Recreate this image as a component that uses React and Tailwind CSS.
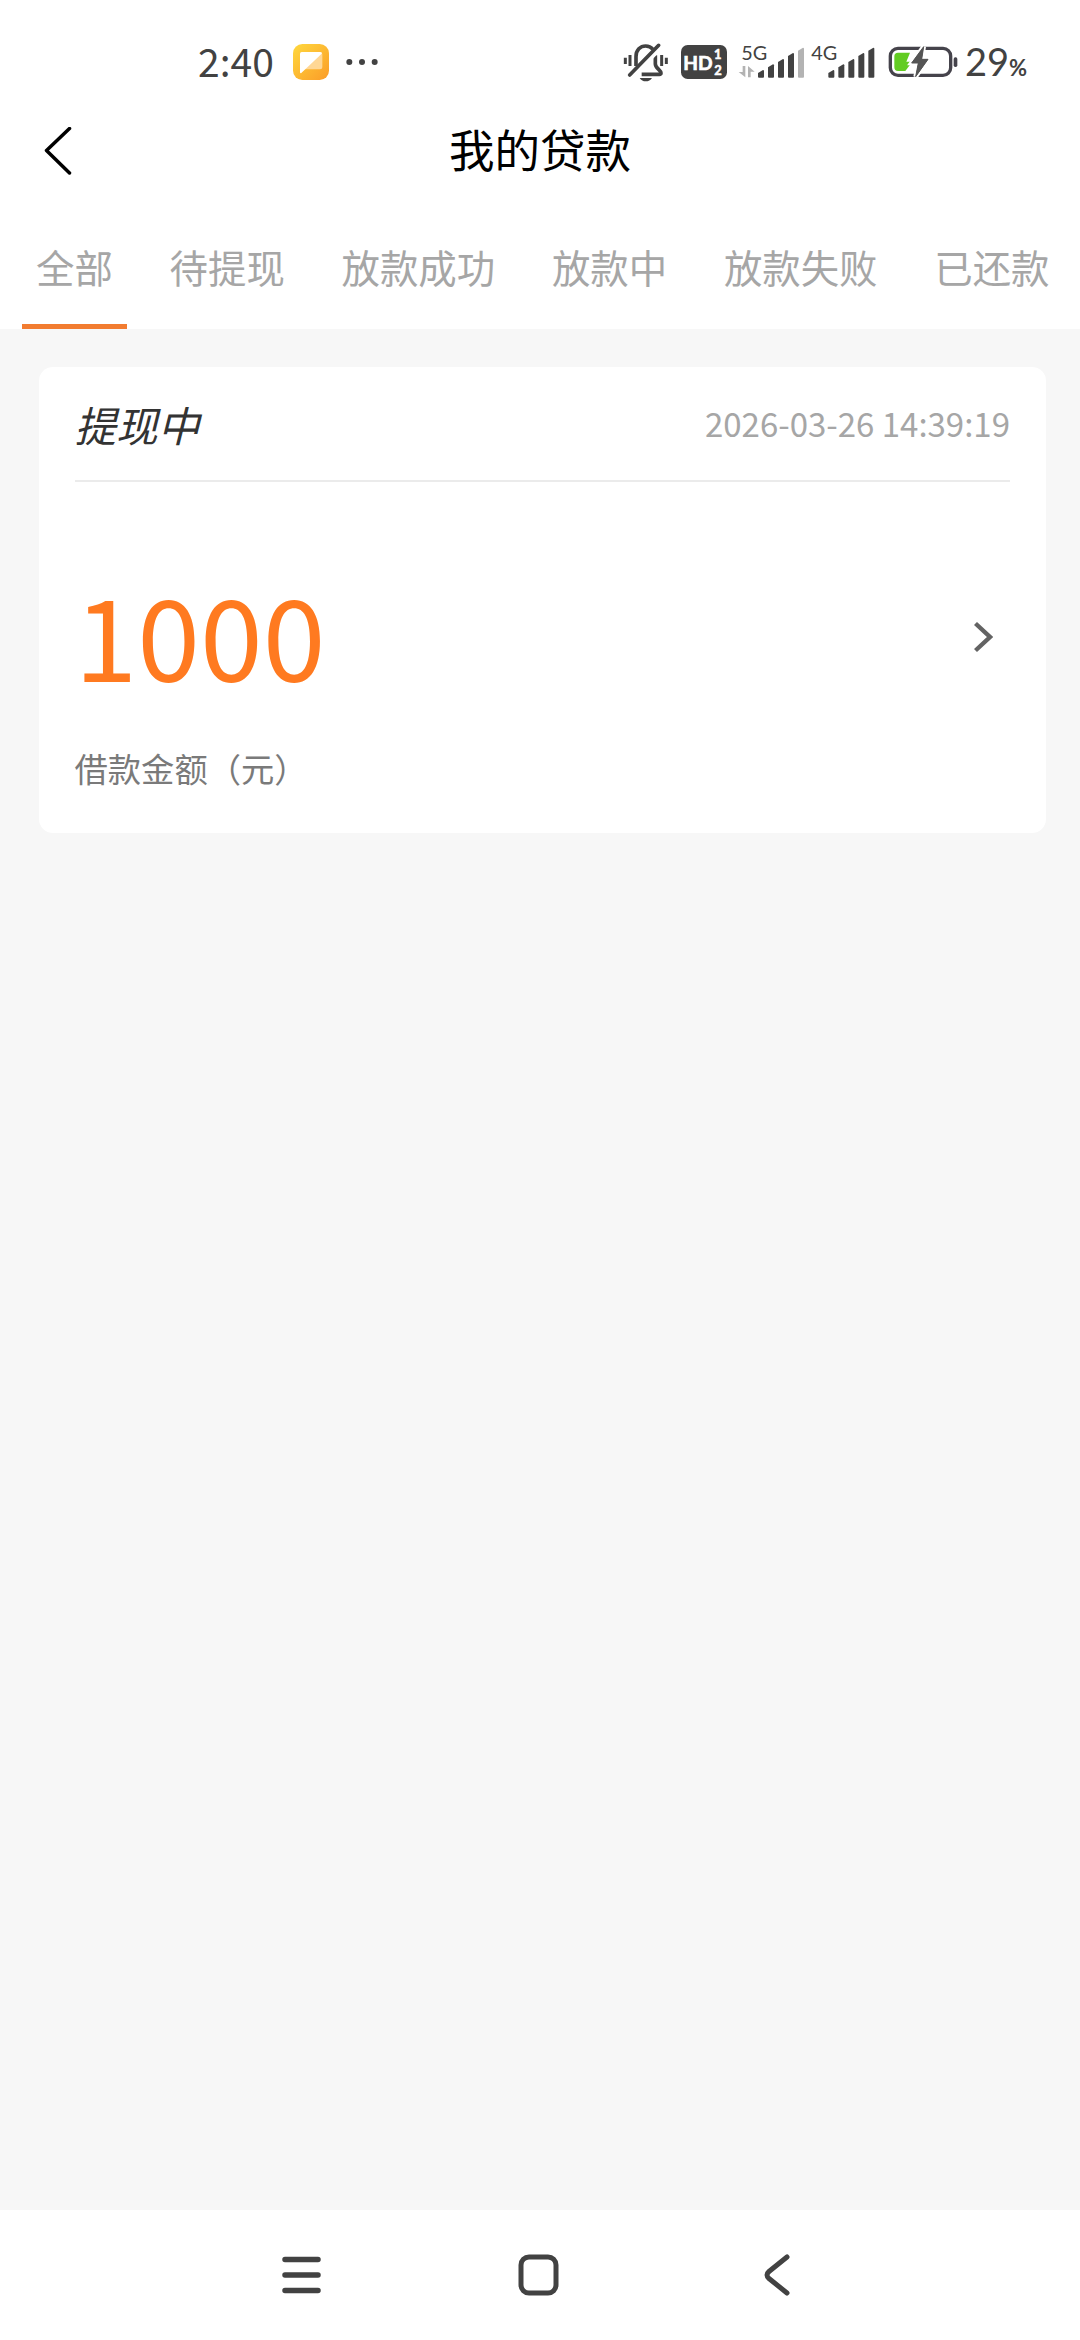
import React, { useState } from 'react';

const TABS = ['全部', '待提现', '放款成功', '放款中', '放款失败', '已还款'];

const LOANS = [
  { id: 1, status: '提现中', time: '2026-03-26 14:39:19', amount: 1000 },
];

// The status bar glyphs share a 40px height, drawn on a grid of 3 units per pixel
const NoteIcon = () => (
  <svg className="w-9 h-10" viewBox="339 36 108 120">
    <defs>
      <linearGradient id="note" x1="0" y1="0" x2="1" y2="1">
        <stop offset="0" stopColor="#ffd83d" />
        <stop offset="1" stopColor="#fb9c28" />
      </linearGradient>
    </defs>
    <rect x="339" y="42" width="108" height="108" rx="28" fill="url(#note)" />
    <path d="M366 66H420Q427 66 427 73V112Q427 118 420 118H374L361 130V71Q361 66 366 66Z" fill="#ffd795" />
    <path d="M366 66H420Q427 66 425 71L363 130Q360 130 360 126V72Q360 66 366 66Z" fill="#fff" />
  </svg>
);

const MutedIcon = () => (
  <svg className="w-[46px] h-10" viewBox="36 36 138 120" fill="none" stroke="#424242">
    <path d="M43 83V102M57 75V108M152 75V108M166 83V102" strokeWidth="9" />
    <path d="M75 108V80C75 60 88 48 104 48C113 48 120 51 126 58" strokeWidth="11" />
    <path
      d="M133 76V102C133 114 150 121 150 129C150 132 148 133 145 133H92"
      strokeWidth="11"
      strokeLinejoin="round"
    />
    <path d="M152 54L71 139" stroke="#fff" strokeWidth="7" />
    <path d="M143 46L56 135" strokeWidth="11" strokeLinecap="round" />
    <path d="M86 144H123C119 151 112 154 104 154C97 154 90 151 86 144Z" fill="#424242" stroke="none" />
  </svg>
);

const HdIcon = () => (
  <svg className="w-[46px] h-10" viewBox="210 36 138 120">
    <rect x="210" y="45" width="138" height="102" rx="20" fill="#424242" />
    <g fill="#fff" className="font-['Lato'] font-bold">
      <text x="217" y="119" fontSize="57" textLength="88" lengthAdjust="spacingAndGlyphs" stroke="#fff" strokeWidth="2">HD</text>
      <text x="309" y="87" fontSize="39" stroke="#fff" strokeWidth="1.5">1</text>
      <text x="310" y="134" fontSize="39" stroke="#fff" strokeWidth="1.5">2</text>
    </g>
  </svg>
);

const BARS = [
  { x: 0, y: 120 },
  { x: 30, y: 103 },
  { x: 60, y: 87 },
  { x: 90, y: 69 },
  { x: 120, y: 53 },
];

const SignalBars = ({ x, weak }) => (
  <g transform={`translate(${x} 0)`}>
    {BARS.map((bar, i) => (
      <path
        key={bar.x}
        d={`M${bar.x + 1} ${bar.y + 9}L${bar.x + 16} ${bar.y}Q${bar.x + 19} ${bar.y} ${bar.x + 19} ${bar.y + 3}V140Q${bar.x + 19} 143 ${bar.x + 16} 143H${bar.x + 4}Q${bar.x + 1} 143 ${bar.x + 1} 140Z`}
        fill={weak && i === 4 ? '#b3b3b3' : '#424242'}
      />
    ))}
  </g>
);

const Signal5G = () => (
  <svg className="w-[67px] h-12 overflow-visible" viewBox="381 24 201 144">
    <text x="391" y="90" fontSize="60" fill="#424242" className="font-['Lato']" textLength="78" lengthAdjust="spacingAndGlyphs">5G</text>
    <path d="M395 108H403V142L383 126H395ZM411 142V108L431 125H419V142Z" fill="#b3b3b3" />
    <SignalBars x={440} weak />
  </svg>
);

const Signal4G = () => (
  <svg className="w-16 h-12 overflow-visible" viewBox="30 24 192 144">
    <text x="31" y="90" fontSize="60" fill="#424242" className="font-['Lato']" textLength="78" lengthAdjust="spacingAndGlyphs">4G</text>
    <SignalBars x={81} />
  </svg>
);

const BatteryIcon = () => (
  <svg className="w-[70px] h-10" viewBox="262 36 210 120">
    <rect x="269" y="55" width="181" height="81" rx="23" fill="none" stroke="#45434b" strokeWidth="10" />
    <rect x="459" y="82" width="11" height="29" rx="5" fill="#45434b" />
    <path d="M292 68H328L317 95H329L322 104L328 104L314 123H292Q281 123 281 112V79Q281 68 292 68Z" fill="#62cc22" />
    <path
      d="M369 50L333 99H353L345 140L382 88H363Z"
      fill="#555"
      stroke="#fff"
      strokeWidth="14"
      paintOrder="stroke"
    />
    <path d="M369 50L333 99H353L345 140L382 88H363Z" fill="#555" stroke="#555" strokeWidth="3" />
  </svg>
);

const StatusBar = () => (
  <div className="h-[124px] flex items-center pl-[198px] text-[#424242]">
    <span className="w-[95px] pb-1 text-[39px] leading-10">2:40</span>
    <NoteIcon />
    <svg className="ml-[17px] w-8 h-10" viewBox="499 36 96 120" fill="#424242">
      <circle cx="509" cy="96" r="9" />
      <circle cx="547" cy="96" r="9" />
      <circle cx="585" cy="96" r="9" />
    </svg>
    <div className="ml-[245px] flex items-center">
      <MutedIcon />
      <div className="ml-3 flex"><HdIcon /></div>
      <div className="ml-[11px] flex"><Signal5G /></div>
      <div className="ml-1.5 flex"><Signal4G /></div>
      <div className="ml-[13px] flex"><BatteryIcon /></div>
      <span className="ml-[7px] pt-1 flex items-baseline font-['Lato'] leading-10">
        <span className="text-[38px]">29</span>
        <span className="text-[22px] font-bold">%</span>
      </span>
    </div>
  </div>
);

const Header = () => (
  <header className="h-[54px] grid grid-cols-3 items-center">
    <svg className="ml-11 w-7 h-12" viewBox="0 0 28 48" fill="none" stroke="#000" strokeWidth="3.5" strokeLinecap="round" strokeLinejoin="round">
      <path d="M25.5 1.5L2.5 23.5L25.5 46" />
    </svg>
    <h1 className="pb-1.5 text-center text-[45.5px] leading-[48px] text-black">我的贷款</h1>
  </header>
);

const Tabs = ({ active, onChange }) => (
  <nav className="h-[151px] pl-[22px] flex gap-[28.8px] overflow-hidden">
    {TABS.map((tab, i) => (
      <button
        key={tab}
        onClick={() => onChange(i)}
        className="shrink-0 flex flex-col justify-end text-[38.4px] leading-[60px] text-[#a6a6a6]"
      >
        <span className="px-3.5 whitespace-nowrap">{tab}</span>
        <span className={i === active ? 'mt-7 h-[5px] w-full bg-[#f27c30]' : 'mt-7 h-[5px] w-full'} />
      </button>
    ))}
  </nav>
);

const LoanCard = ({ loan }) => (
  <div className="ml-[38.5px] mr-[34px] h-[466px] px-9 rounded-[14px] bg-white">
    <div className="h-[115px] flex items-center justify-between border-b-2 border-[#ebebeb]">
      <span className="pt-0.5 text-[41.6px] italic text-[#333]">{loan.status}</span>
      <span className="text-[33px] text-[#a6a6a6]">{loan.time}</span>
    </div>
    <div className="flex items-center justify-between pt-[81px]">
      <span className="text-[113px] leading-[140px] text-[#ff7a20]">{loan.amount}</span>
      <svg className="mr-[17px] mt-2 w-5 h-8" viewBox="0 0 20 32" fill="none" stroke="#636363" strokeWidth="4.4">
        <path d="M2.5 2.5L17 16L2.5 29.5" />
      </svg>
    </div>
    <div className="mt-[41px] text-[33.3px] leading-[48px] text-[#7a7a7a]">借款金额（元）</div>
  </div>
);

const NavBar = () => (
  <div className="h-[130px] bg-white flex items-center pl-[282px]">
    <svg className="w-[39px] h-[42px]" viewBox="0 0 39 42" stroke="#424242" strokeWidth="5.5" strokeLinecap="round">
      <path d="M3 5.5H36M3 21H36M3 36.5H36" />
    </svg>
    <svg className="ml-[197px] w-[41px] h-[42px]" viewBox="0 0 41 42" fill="none" stroke="#424242" strokeWidth="5">
      <rect x="3" y="3" width="35" height="36" rx="8" />
    </svg>
    <svg className="ml-[205px] w-[26px] h-[42px]" viewBox="0 0 26 42" fill="none" stroke="#424242" strokeWidth="5" strokeLinecap="round">
      <path d="M23 3L5 17.5Q1 21 5 24.5L23 39" />
    </svg>
  </div>
);

const App = () => {
  const [active, setActive] = useState(0);

  return (
    <div className="w-[1080px] h-[2340px] flex flex-col bg-[#f7f7f7] font-['Noto_Sans_CJK_SC',sans-serif]">
      <div className="bg-white">
        <StatusBar />
        <Header />
        <Tabs active={active} onChange={setActive} />
      </div>
      <main className="flex-grow pt-[38px]">
        {LOANS.map((loan) => (
          <LoanCard key={loan.id} loan={loan} />
        ))}
      </main>
      <NavBar />
    </div>
  );
};

export default App;
